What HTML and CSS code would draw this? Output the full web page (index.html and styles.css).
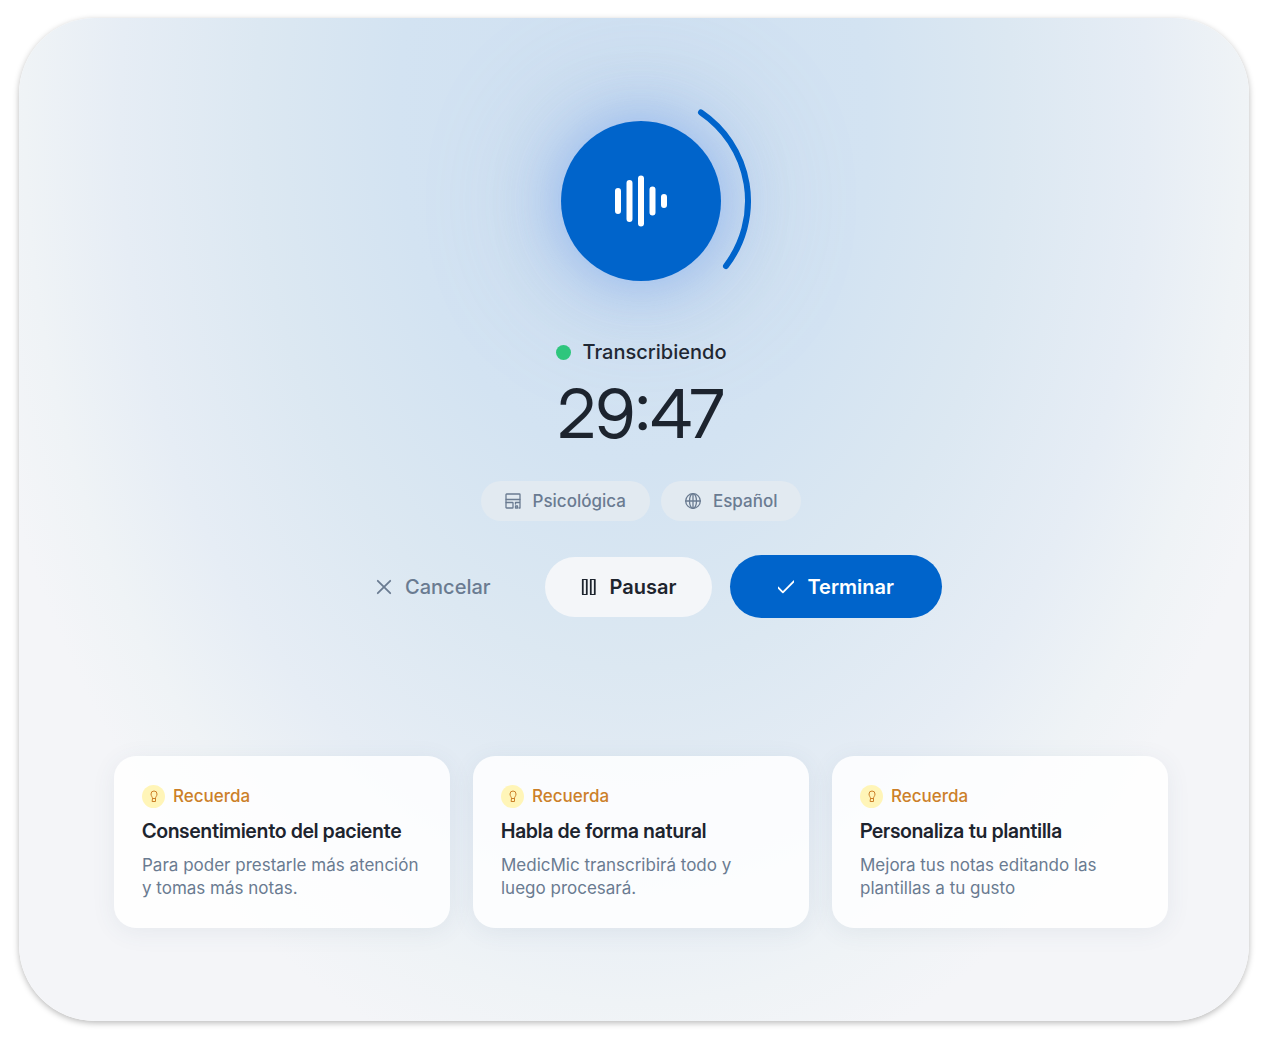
FILE: index.html
```html
<!DOCTYPE html>
<html lang="es">
<head>
<meta charset="utf-8">
<meta name="viewport" content="width=device-width, initial-scale=1">
<title>MedicMic</title>
<link rel="stylesheet" href="styles.css">
</head>
<body>
<main class="panel">
  <section class="session">
    <div class="dial">
      <svg class="dial-wave" viewBox="0 0 54 54" aria-hidden="true">
        <path d="M4 17v20M15.500 9v36M27 4.500v45M38.500 15.500v23M50 23v8"/>
      </svg>
      <svg class="dial-arc" viewBox="-120 -120 240 240" aria-hidden="true">
        <path d="M60-88.600A107 107 0 0 1 85 65"/>
      </svg>
    </div>
    <p class="status"><span class="status-dot"></span>Transcribiendo</p>
    <p class="timer">29:47</p>
    <ul class="chips">
      <li class="chip">
        <svg class="chip-icon" viewBox="0 0 16 16" aria-hidden="true"><rect x="1" y="1" width="14" height="5.500" rx=".6"/><rect x="1" y="9.500" width="7" height="5.500" rx=".6"/><path d="M1 6.500v3M15 6.500v3M10.500 11V9.500H15V15h-1M10.500 15v-2h2v2z"/></svg>
        Psicológica
      </li>
      <li class="chip">
        <svg class="chip-icon" viewBox="0 0 16 16" aria-hidden="true"><circle cx="8" cy="8" r="7.300"/><ellipse cx="8" cy="8" rx="3.500" ry="7.300"/><path d="M.7 8h14.600M8 .7v14.600"/></svg>
        Español
      </li>
    </ul>
    <div class="actions">
      <button class="button button-cancel" type="button">
        <svg class="button-icon" viewBox="0 0 18 18" aria-hidden="true"><path d="M2 2l14 14M16 2l-14 14"/></svg>
        Cancelar
      </button>
      <button class="button button-pause" type="button">
        <svg class="button-icon" viewBox="0 0 18 18" aria-hidden="true"><rect x="2" y="0" width="4.500" height="18" rx="1"/><rect x="11" y="0" width="4.500" height="18" rx="1"/></svg>
        Pausar
      </button>
      <button class="button button-finish" type="button">
        <svg class="button-icon" viewBox="0 0 18 18" aria-hidden="true"><path d="M0 9.500l5.500 5.500L18 2.500"/></svg>
        Terminar
      </button>
    </div>
  </section>
  <section class="tips">
    <article class="tip">
      <p class="tip-label"><span class="tip-badge"><svg class="tip-icon" viewBox="0 0 12 14" aria-hidden="true"><path d="M4.500 9C4.500 8 3 7 3 5a3 3 0 0 1 6 0C9 7 7.500 8 7.500 9v3.500h-3zM4.500 9.500h3"/></svg></span>Recuerda</p>
      <h2 class="tip-title">Consentimiento del paciente</h2>
      <p class="tip-text">Para poder prestarle más atención y tomas más notas.</p>
    </article>
    <article class="tip">
      <p class="tip-label"><span class="tip-badge"><svg class="tip-icon" viewBox="0 0 12 14" aria-hidden="true"><path d="M4.500 9C4.500 8 3 7 3 5a3 3 0 0 1 6 0C9 7 7.500 8 7.500 9v3.500h-3zM4.500 9.500h3"/></svg></span>Recuerda</p>
      <h2 class="tip-title">Habla de forma natural</h2>
      <p class="tip-text">MedicMic transcribirá todo y luego procesará.</p>
    </article>
    <article class="tip">
      <p class="tip-label"><span class="tip-badge"><svg class="tip-icon" viewBox="0 0 12 14" aria-hidden="true"><path d="M4.500 9C4.500 8 3 7 3 5a3 3 0 0 1 6 0C9 7 7.500 8 7.500 9v3.500h-3zM4.500 9.500h3"/></svg></span>Recuerda</p>
      <h2 class="tip-title">Personaliza tu plantilla</h2>
      <p class="tip-text">Mejora tus notas editando las plantillas a tu gusto</p>
    </article>
  </section>
</main>
</body>
</html>
```

FILE: styles.css
```css
* {
  box-sizing: border-box;
}

body {
  margin: 0;
  padding: 18px 19px;
  background: #fff;
  color: #1d242e;
  font-family: Inter, "Liberation Sans", sans-serif;
}

p,
h2,
ul {
  margin: 0;
  padding: 0;
}

svg {
  fill: none;
  stroke: currentColor;
  stroke-linecap: round;
  stroke-linejoin: round;
}

.panel {
  display: flex;
  flex-direction: column;
  gap: 138px;
  overflow: hidden;
  padding: 103px 81px 93px 95px;
  border-radius: 76px;
  background: radial-gradient(ellipse 55% 98% at 50% 10%, #cfe0f1 0%, #d3e3f2 35%, #dce8f2 56%, #e6edf5 76%, #eff3f6 90%, #f4f5f8 100%);
  box-shadow: 0 2px 6px rgba(0, 0, 0, 0.28);
}

.session {
  display: flex;
  flex-direction: column;
  align-items: center;
}

.dial {
  position: relative;
  display: grid;
  place-items: center;
  width: 160px;
  height: 160px;
  border-radius: 50%;
  background: #0064cb;
  color: #fff;
  box-shadow: 0 0 60px rgba(100, 150, 240, 0.5), 0 0 120px 20px rgba(130, 170, 225, 0.3);
}

.dial-wave {
  width: 54px;
  height: 54px;
  stroke-width: 6;
}

.dial-arc {
  position: absolute;
  inset: -40px;
  color: #0064cb;
  stroke-width: 6;
}

.status {
  display: flex;
  align-items: center;
  gap: 12px;
  margin-top: 57px;
  font-size: 20px;
  font-weight: 500;
  line-height: 28px;
}

.status-dot {
  width: 15px;
  height: 15px;
  border-radius: 50%;
  background: #2dc77b;
}

.timer {
  margin-top: 11px;
  font-family: "Inter Display", Inter, "Liberation Sans", sans-serif;
  font-size: 68px;
  font-weight: 400;
  line-height: 72px;
}

.chips {
  display: flex;
  gap: 11px;
  margin-top: 32px;
  list-style: none;
}

.chip {
  display: flex;
  align-items: center;
  gap: 12px;
  padding: 8px 24px;
  border-radius: 20px;
  background: #e2eaf1;
  color: #6a7b91;
  font-size: 17px;
  font-weight: 500;
  line-height: 24px;
}

.chip-icon {
  width: 16px;
  height: 16px;
  stroke-width: 1.3;
}

.actions {
  display: flex;
  align-items: center;
  gap: 18px;
  margin-top: 34px;
}

.button {
  display: flex;
  align-items: center;
  gap: 13px;
  padding: 16px 36px;
  border: 0;
  border-radius: 32px;
  background: none;
  font: 500 20px/28px Inter, "Liberation Sans", sans-serif;
}

.button-icon {
  width: 16px;
  height: 16px;
  stroke-width: 2;
}

.button-cancel {
  color: #6a7b91;
}

.button-pause {
  background: #f4f6f9;
  color: #1d242e;
  font-weight: 600;
}

.button-finish {
  padding: 18px 48px 17px;
  background: #0064cb;
  color: #fff;
  font-weight: 600;
}

.tips {
  display: grid;
  grid-template-columns: repeat(3, 1fr);
  gap: 23px;
}

.tip {
  padding: 28px 29px 28px 28px;
  border-radius: 22px;
  background: rgba(255, 255, 255, 0.84);
  box-shadow: 0 4px 24px rgba(70, 90, 120, 0.08);
}

.tip-label {
  display: flex;
  align-items: center;
  gap: 8px;
  color: #cc8029;
  font-size: 17px;
  font-weight: 500;
  line-height: 24px;
}

.tip-badge {
  display: grid;
  place-items: center;
  width: 23px;
  height: 23px;
  border-radius: 50%;
  background: #fff5b8;
}

.tip-icon {
  width: 12px;
  height: 14px;
}

.tip-title {
  margin-top: 9px;
  font-family: "Inter Display", Inter, "Liberation Sans", sans-serif;
  font-size: 20px;
  font-weight: 600;
  line-height: 28px;
}

.tip-text {
  margin-top: 9px;
  color: #6a7b91;
  font-size: 17px;
  line-height: 23px;
}
```
